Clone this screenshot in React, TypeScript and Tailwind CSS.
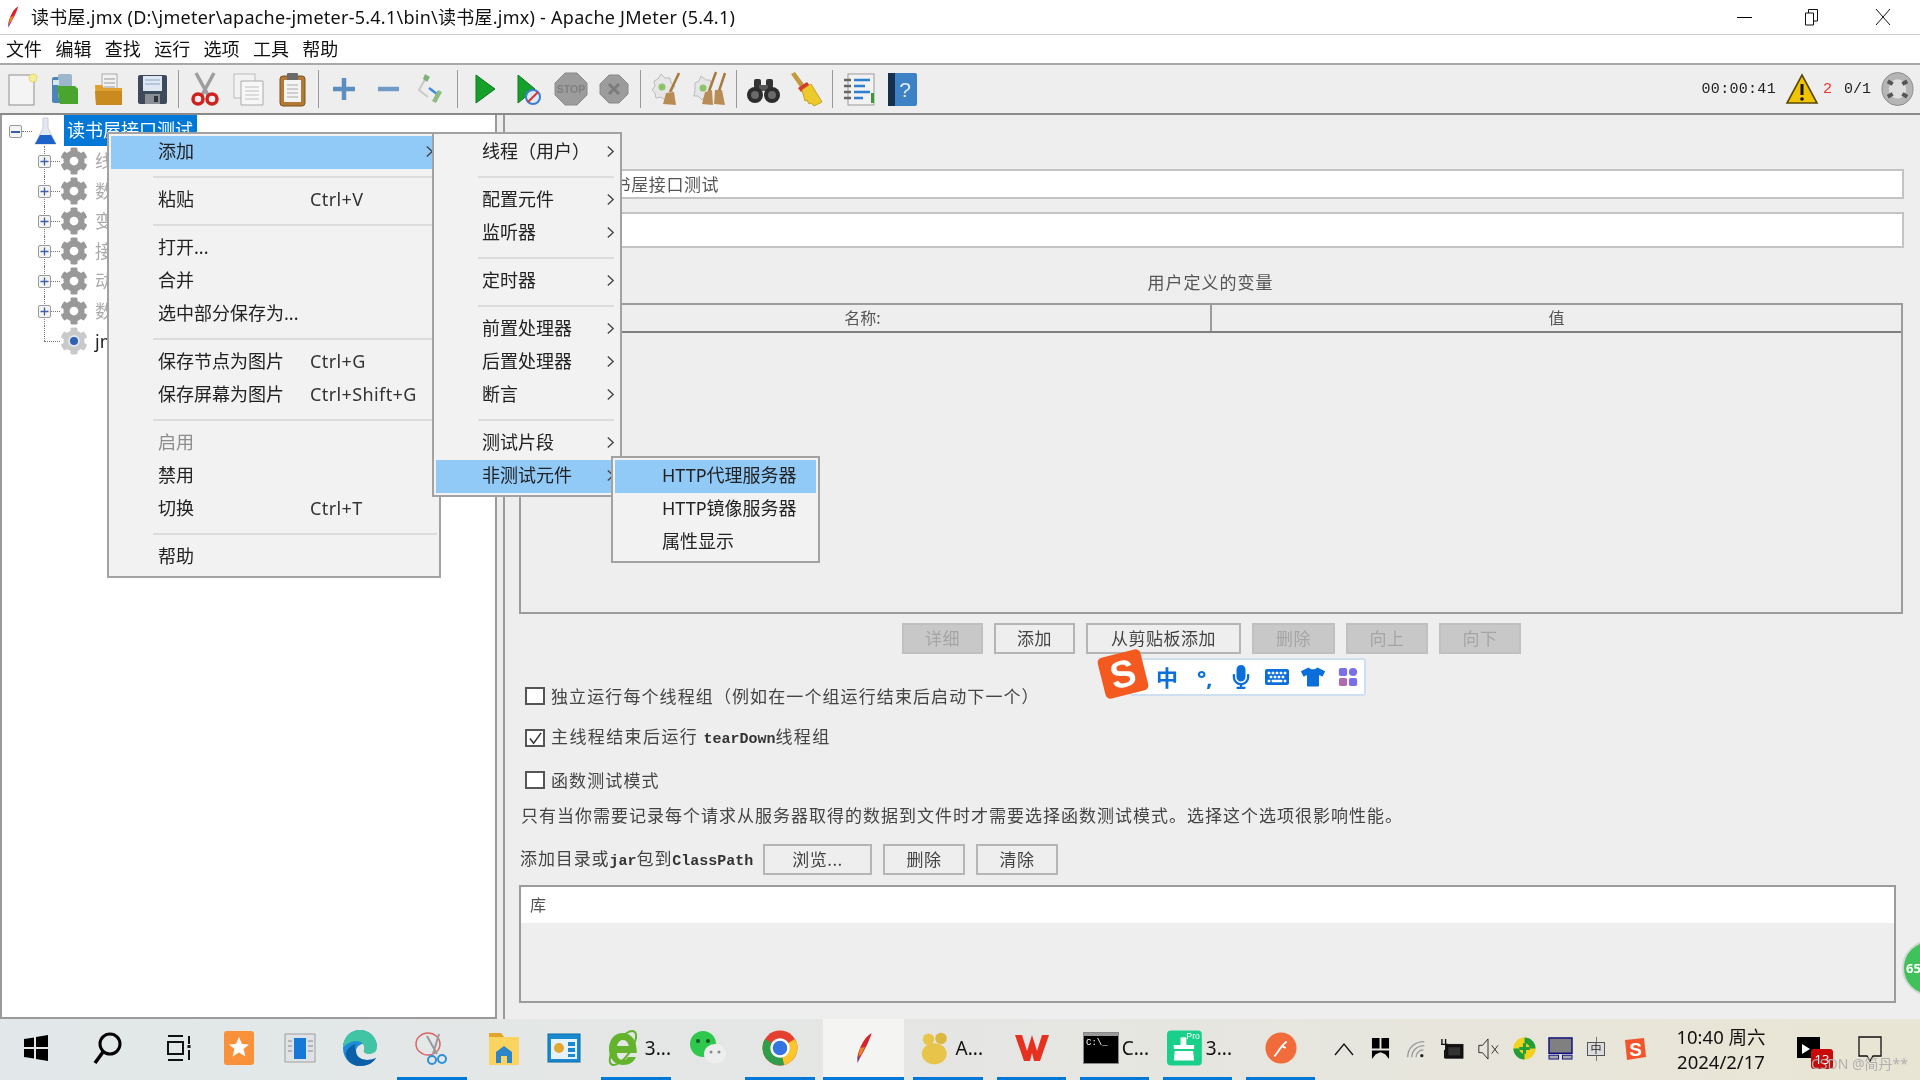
import React from "react";
import { FaCog, FaMicrophone, FaKeyboard, FaTshirt } from "react-icons/fa";

const Svg = ({ c, children, box = "0 0 36 36" }: { c: string; children: React.ReactNode; box?: string }) => (
  <svg viewBox={box} className={c}>{children}</svg>
);
const I = "w-[36px] h-[36px]";
const T = "w-[36px] h-[36px]";

const Feather = ({ c }: { c: string }) => (
  <Svg c={c}>
    <path d="M26 2C19 6 14 15 11 27l3 1C19 19 24 10 26 2z" fill="#d8232a" />
    <path d="M14 18l5-1-4 8-3 2z" fill="#e8862a" />
    <path d="M11 27l3 1-3 6z" fill="#7a2a8a" />
  </Svg>
);

const ToolIcons: Record<string, React.ReactNode> = {
  new: (<Svg c={I}><rect x="5" y="4" width="25" height="30" fill="#f4f4f4" stroke="#8f8f8f" /><circle cx="29" cy="7" r="4" fill="#f4ee9a" stroke="#e5d86a" /></Svg>),
  tmpl: (<Svg c={I}><rect x="5" y="6" width="13" height="26" rx="2" fill="#4a86b8" /><rect x="11" y="3" width="14" height="24" rx="2" fill="#9cb7cc" /><path d="M10 15h18l3 3v15H13z" fill="#4aa52e" /><rect x="6" y="9" width="6" height="5" fill="#d8e8f0" /></Svg>),
  open: (<Svg c={I}><rect x="11" y="3" width="15" height="20" fill="#f2f2f2" stroke="#aaa" /><path d="M13 8h11M13 12h11M13 16h11" stroke="#999" /><path d="M4 14h7l2 3h18v17H5z" fill="#e0a030" /><path d="M4 20h27v14H5z" fill="#c98a20" /></Svg>),
  save: (<Svg c={I}><rect x="4" y="4" width="29" height="29" rx="2" fill="#3d4a5c" /><rect x="9" y="5" width="19" height="15" fill="#dfe8f2" /><path d="M11 9h15M11 13h15" stroke="#8aa5c5" /><rect x="11" y="23" width="15" height="10" fill="#8a8f96" /><rect x="20" y="25" width="4" height="6" fill="#2c3440" /></Svg>),
  cut: (<Svg c={I}><path d="M9 2l12 22M27 2L15 24" stroke="#9e9e9e" strokeWidth="3.5" /><circle cx="11" cy="28" r="5" fill="none" stroke="#d02020" strokeWidth="3.5" /><circle cx="25" cy="28" r="5" fill="none" stroke="#d02020" strokeWidth="3.5" /></Svg>),
  copy: (<Svg c={I}><rect x="4" y="3" width="21" height="24" fill="#f2f2f2" stroke="#bbb" /><path d="M11 10h22v24H11z" fill="#f7f7f7" stroke="#aaa" /><path d="M15 16h14M15 20h14M15 24h14M15 28h14" stroke="#c0c0c0" /></Svg>),
  paste: (<Svg c={I}><rect x="6" y="5" width="25" height="30" rx="3" fill="#b27a35" stroke="#7c5520" /><rect x="10" y="9" width="17" height="22" fill="#f4f4f4" /><rect x="13" y="2" width="11" height="7" rx="1" fill="#6a6a6a" /><path d="M13 14h11M13 18h11M13 22h11M13 26h11" stroke="#aaa" /></Svg>),
  plus: (<Svg c={I}><path d="M18 7v22M7 18h22" stroke="#5b8fc0" strokeWidth="4.5" /></Svg>),
  minus: (<Svg c={I}><path d="M8 18h21" stroke="#6f9cc6" strokeWidth="4.5" /></Svg>),
  toggle: (<Svg c={I}><path d="M14 5l-8 14 9 7" stroke="#c9c9c9" fill="none" strokeWidth="2" /><path d="M12 3l5 3-3 5-4-3z" fill="#7fb27a" /><path d="M16 17l8 6" stroke="#3d8be0" strokeWidth="2.5" /><path d="M29 21l-6 11-4-2 6-11z" fill="#8dbb80" /></Svg>),
  start: (<Svg c={I}><path d="M10 4l19 14-19 14z" fill="#14a02a" stroke="#0c7a1c" /></Svg>),
  startnt: (<Svg c={I}><path d="M9 4l17 14-17 14z" fill="#14a02a" stroke="#0c7a1c" /><circle cx="24" cy="26" r="7" fill="#dfeaf5" stroke="#3a7fd0" strokeWidth="2" /><path d="M19 31l10-10" stroke="#e03030" strokeWidth="2" /></Svg>),
  stop: (<Svg c={I}><path d="M12 2h12l10 10v12L24 34H12L2 24V12z" fill="#9c9c9c" stroke="#8a8a8a" /><text x="18" y="22" fontSize="10.5" fontWeight="700" textAnchor="middle" fill="#7f7f7f" fontFamily="Liberation Sans">STOP</text></Svg>),
  shut: (<Svg c={I}><path d="M13 4h10l9 9v10l-9 9H13l-9-9V13z" fill="#9c9c9c" stroke="#8a8a8a" /><path d="M13 13l10 10M23 13L13 23" stroke="#7b7b7b" strokeWidth="3" /></Svg>),
  clear: (<Svg c={I}><path d="M5 10l4-2 3-5 4 4h5l1 5 4 3-3 4 1 5-5 1-3 4-4-3-5 1-1-5-3-3 3-4z" fill="#e6e6e6" stroke="#bbb" /><circle cx="13" cy="16" r="3.5" fill="#8cc46a" /><path d="M30 2L21 21" stroke="#a87a3e" strokeWidth="2.5" /><path d="M17 22l8-1 2 13-13-1z" fill="#b88d55" /></Svg>),
  clearall: (<Svg c={I}><path d="M3 12l4-2 2-5 5 4 4 0 2 5-2 5 1 6-6 0-3 4-4-4-4 0 1-6z" fill="#e6e6e6" stroke="#bbb" /><circle cx="11" cy="17" r="3.5" fill="#8cc46a" /><path d="M24 1L17 20M33 2L27 20" stroke="#a87a3e" strokeWidth="2.5" /><path d="M13 21l7-2 1 15-11-1z" fill="#b88d55" /><path d="M23 19l7 0 3 15-11-1z" fill="#b88d55" /></Svg>),
  bino: (<Svg c={I}><rect x="9" y="8" width="7" height="9" rx="2" fill="#333" /><rect x="21" y="8" width="7" height="9" rx="2" fill="#333" /><rect x="14" y="14" width="9" height="6" fill="#555" /><circle cx="10" cy="24" r="8" fill="#2c2c2c" /><circle cx="27" cy="24" r="8" fill="#2c2c2c" /><circle cx="10" cy="24" r="4" fill="#6a6a6a" /><circle cx="27" cy="24" r="4" fill="#6a6a6a" /></Svg>),
  broom: (<Svg c={I}><path d="M3 3l4-2 11 15-4 3z" fill="#c59a3a" /><path d="M10 17l9-6 3 4-9 6z" fill="#d23a2a" /><path d="M14 19l9-6 11 18-8 4-3-3-2 1-2-4-2 1z" fill="#ecc92c" stroke="#c9a21e" /></Svg>),
  list: (<Svg c={I}><rect x="7" y="3" width="26" height="31" fill="#f2f2f2" stroke="#9a9a9a" /><path d="M13 9h16M13 15h11M13 21h16M13 27h9" stroke="#2f7fd0" strokeWidth="2.5" /><path d="M3 9h7M3 15h7M3 21h7M3 27h7" stroke="#666" strokeWidth="2.5" /><rect x="30" y="22" width="3" height="10" fill="#3a9a3a" /></Svg>),
  help: (<Svg c={I}><rect x="6" y="2" width="27" height="33" rx="2" fill="#3d82c4" /><rect x="4" y="2" width="7" height="33" fill="#16304f" /><text x="21" y="26" fontSize="21" textAnchor="middle" fill="#e5eef7" fontFamily="Liberation Sans">?</text></Svg>),
};

const Slot = ({ k }: { k: string }) => (
  <div className="w-[43.5px] h-full flex items-center justify-center shrink-0">{ToolIcons[k]}</div>
);
const Sep = () => <div className="w-px h-[38px] mx-[4px] bg-[#999] shrink-0" />;

const MenuRow = ({ label, sc, hi, dis }: { label: string; sc?: string; hi?: boolean; dis?: boolean }) => (
  <div className={`h-[33px] flex items-center pl-[47px] pb-[3px] text-[18px] leading-none ${hi ? "bg-[#91c9f7]" : ""} ${dis ? "text-[#8d8d8d]" : "text-[#222]"}`}>
    <span className="w-[152px] shrink-0 whitespace-nowrap">{label}</span>
    {sc && <span className="whitespace-nowrap text-[#333] tracking-[0.4px]">{sc}</span>}
  </div>
);
const MenuSep = ({ c = "ml-[42px]" }: { c?: string }) => (
  <div className="h-[15px] flex items-center"><div className={`h-[2px] w-full bg-[#dcdcdc] ${c}`} /></div>
);
const Arrow = () => (
  <svg viewBox="0 0 10 14" className="w-[9px] h-[13px] shrink-0 absolute right-[3px] top-[9px]">
    <path d="M2 1.5L8 7l-6 5.5" stroke="#444" strokeWidth="1.5" fill="none" />
  </svg>
);
const SubRow = ({ label, hi }: { label: string; hi?: boolean }) => (
  <div className={`relative h-[33px] flex items-center pl-[46px] pb-[3px] text-[18px] leading-none text-[#222] whitespace-nowrap ${hi ? "bg-[#91c9f7]" : ""}`}>
    {label}
    <Arrow />
  </div>
);

const Btn = ({ label, w, dis }: { label: string; w: string; dis?: boolean }) => (
  <div className={`${w} h-[31px] flex items-center justify-center pb-[2px] border-2 text-[17px] leading-none tracking-[0.5px] shrink-0 ${dis ? "bg-[#c8c8c8] border-[#c0c0c0] text-[#a5a5a5]" : "bg-[#eeeeee] border-[#b5b5b5] text-[#444]"}`}>{label}</div>
);
const Check = ({ on }: { on?: boolean }) => (
  <div className="w-[20px] h-[18px] border-2 border-[#555] bg-white shrink-0 flex items-center justify-center">
    {on && <svg viewBox="0 0 16 16" className="w-[15px] h-[15px]"><path d="M2 8l4 5 8-11" stroke="#333" strokeWidth="1.6" fill="none" /></svg>}
  </div>
);
const Mono = ({ children }: { children: React.ReactNode }) => (
  <span className="font-['Liberation_Mono',monospace] text-[15px] font-bold text-[#333] tracking-[0px]">{children}</span>
);

const TreeRow = ({ label, last, j }: { label: string; last?: boolean; j?: boolean }) => (
  <div className="h-[30px] flex items-center relative">
    <div className={`absolute left-[42px] top-0 w-0 border-l border-dotted border-[#777] ${last ? "h-[15px]" : "h-[30px]"}`} />
    <div className="absolute left-[42px] top-[15px] w-[16px] border-t border-dotted border-[#777]" />
    {!j && (
      <div className="absolute left-[36px] top-[9px] w-[13px] h-[13px] bg-[#f4f4f4] border border-[#9a9a9a] rounded-[2px] flex items-center justify-center">
        <svg viewBox="0 0 9 9" className="w-[9px] h-[9px]"><path d="M4.5 0.5v8M0.5 4.5h8" stroke="#3a5fa8" strokeWidth="1.3" /></svg>
      </div>
    )}
    <div className="ml-[58px] w-[28px] h-[28px] relative flex items-center justify-center shrink-0">
      <FaCog className={`w-[28px] h-[28px] ${j ? "text-[#c9c9c9]" : "text-[#999999]"}`} />
      {j && <div className="absolute w-[12px] h-[12px] rounded-full bg-[#2f62b0] border-2 border-[#dde6f2]" />}
    </div>
    <span className={`ml-[7px] text-[18px] leading-none whitespace-nowrap ${j ? "text-[#222]" : "text-[#aaa]"}`}>{label}</span>
  </div>
);

const Task = ({ w, run, ml, bg, icon, label }: { w: string; run?: boolean; ml?: string; bg?: string; icon: React.ReactNode; label?: string }) => (
  <div className={`${w} ${ml || ""} ${bg || ""} h-full shrink-0 flex items-center border-b-[3px] ${run ? "border-[#0078d7]" : "border-transparent"} ${label ? "pl-[4px] gap-[4px]" : "justify-center"}`}>
    {icon}
    {label && <span className="text-[19px] leading-none text-[#111]">{label}</span>}
  </div>
);
const Tray = ({ children }: { children: React.ReactNode }) => (
  <div className="w-[36px] h-full flex items-center justify-center shrink-0 pb-[2px]">{children}</div>
);

export default function App() {
  return (
    <div className="relative w-[1920px] h-[1080px] overflow-hidden flex flex-col bg-[#eeeeee] font-['Noto_Sans','Noto_Sans_CJK_SC',sans-serif] blur-[0.35px]">
      {/* title bar */}
      <div className="h-[35px] shrink-0 bg-white border-b border-[#cfcfcf] flex items-center">
        <Feather c="w-[24px] h-[24px] ml-[1px]" />
        <span className="ml-[6px] text-[18px] leading-none tracking-[0.25px] text-[#111] whitespace-nowrap">读书屋.jmx (D:\jmeter\apache-jmeter-5.4.1\bin\读书屋.jmx) - Apache JMeter (5.4.1)</span>
        <div className="ml-auto flex items-center h-full">
          <div className="w-[62px] flex justify-center"><div className="w-[15px] h-px bg-black" /></div>
          <div className="w-[74px] flex justify-center">
            <svg viewBox="0 0 16 18" className="w-[16px] h-[18px]"><path d="M1.5 5h8v12h-8zM4.5 5V1.5h9V13H9.5" fill="none" stroke="#111" /></svg>
          </div>
          <div className="w-[68px] flex justify-center mr-[3px]">
            <svg viewBox="0 0 16 18" className="w-[16px] h-[18px]"><path d="M1 1l14 16M15 1L1 17" stroke="#111" /></svg>
          </div>
        </div>
      </div>
      {/* menu bar */}
      <div className="h-[30px] shrink-0 bg-white border-b-2 border-[#a9a9a9] flex items-center pl-[6px] gap-[13.4px] text-[18px] leading-none text-[#111]">
        {["文件", "编辑", "查找", "运行", "选项", "工具", "帮助"].map((m) => (
          <span key={m}>{m}</span>
        ))}
      </div>
      {/* toolbar */}
      <div className="h-[50px] shrink-0 bg-[#eeeeee] border-b-2 border-[#8a8a8a] flex items-center">
        <Slot k="new" /><Slot k="tmpl" /><Slot k="open" /><Slot k="save" /><Sep />
        <Slot k="cut" /><Slot k="copy" /><Slot k="paste" /><Sep />
        <Slot k="plus" /><Slot k="minus" /><Slot k="toggle" /><Sep />
        <Slot k="start" /><Slot k="startnt" /><Slot k="stop" /><Slot k="shut" /><Sep />
        <Slot k="clear" /><Slot k="clearall" /><Sep />
        <Slot k="bino" /><Slot k="broom" /><Sep />
        <Slot k="list" /><Slot k="help" />
        <div className="ml-auto flex items-center pr-[6px]">
          <span className="mt-[3px] font-['Liberation_Mono',monospace] text-[15px] tracking-[0.3px] text-[#222]">00:00:41</span>
          <svg viewBox="0 0 34 32" className="w-[34px] h-[32px] ml-[9px]"><path d="M17 2l15 28H2z" fill="#f0c400" stroke="#5a4a00" strokeWidth="1.6" /><path d="M17 11v11" stroke="#111" strokeWidth="3" /><circle cx="17" cy="26" r="1.8" fill="#111" /></svg>
          <span className="mt-[3px] ml-[4px] font-['Liberation_Mono',monospace] text-[15px] text-[#f03030]">2</span>
          <span className="mt-[3px] ml-[12px] font-['Liberation_Mono',monospace] text-[15px] text-[#222]">0/1</span>
          <svg viewBox="0 0 34 36" className="w-[33px] h-[36px] ml-[10px]"><ellipse cx="17" cy="18" rx="16" ry="17" fill="#b5b5b5" stroke="#8a8a8a" /><ellipse cx="17" cy="18" rx="9" ry="10" fill="#dedede" /><path d="M7 10l5 3M27 10l-5 3M7 26l5-3M27 26l-5-3" stroke="#555" strokeWidth="4" /></svg>
        </div>
      </div>
      {/* main */}
      <div className="h-[904px] shrink-0 flex">
        {/* tree */}
        <div className="w-[497px] shrink-0 bg-white border-l-2 border-r-2 border-b-2 border-[#9a9a9a] relative">
          <div className="h-[31px] flex items-center relative">
            <div className="absolute left-[7px] top-[10px] w-[13px] h-[13px] bg-[#f4f4f4] border border-[#9a9a9a] rounded-[2px] flex items-center justify-center">
              <div className="w-[9px] h-[2px] bg-[#3a5fa8]" />
            </div>
            <div className="absolute left-[20px] top-[16px] w-[10px] border-t border-dotted border-[#777]" />
            <svg viewBox="0 0 24 30" className="absolute left-[31px] top-[2px] w-[24px] h-[30px]"><path d="M10 1h5v10l8 16H2l8-16z" fill="#e4e9f1" stroke="#c6ccd6" /><path d="M7 18h11l5 9H2z" fill="#1c62c8" /></svg>
            <div className="ml-[62px] w-[133px] h-[31px] bg-[#0078d7] text-white text-[18px] leading-none pl-[3px] pb-[2px] flex items-center whitespace-nowrap">读书屋接口测试</div>
          </div>
          <TreeRow label="线程组" />
          <TreeRow label="数据库" />
          <TreeRow label="变量" />
          <TreeRow label="接口" />
          <TreeRow label="动态" />
          <TreeRow label="数据" />
          <TreeRow label="jmeter" last j />
        </div>
        <div className="w-[6px] shrink-0" />
        {/* right pane */}
        <div className="flex-1 border-l-2 border-[#9a9a9a] pl-[14px] flex flex-col text-[#444] font-['Noto_Sans_CJK_SC',sans-serif]">
          <div className="mt-[54px] h-[30px] ml-[66px] mr-[16px] bg-white border-2 border-[#c4c4c4] flex items-center pl-[9px] pb-[2px] text-[17px] leading-none tracking-[0.6px] text-[#555] shrink-0">读书屋接口测试</div>
          <div className="mt-[13px] h-[36px] ml-[66px] mr-[16px] bg-white border-2 border-[#c4c4c4] shrink-0" />
          <div className="h-[55px] w-[1383px] shrink-0 flex items-end justify-center pb-[13px] text-[17px] leading-none tracking-[1px] text-[#555]">用户定义的变量</div>
          <div className="h-[311px] w-[1384px] shrink-0 border-2 border-[#9c9c9c] flex flex-col">
            <div className="h-[28px] shrink-0 border-b-2 border-[#7f7f7f] flex text-[16px] leading-none text-[#555]">
              <div className="w-[691px] flex items-center justify-center border-r-2 border-[#9c9c9c] pb-[2px] pr-[6px]">名称:</div>
              <div className="flex-1 flex items-center justify-center pb-[2px]">值</div>
            </div>
          </div>
          <div className="mt-[9px] h-[31px] w-[1385px] shrink-0 flex justify-center gap-[11px]">
            <Btn label="详细" w="w-[81px]" dis />
            <Btn label="添加" w="w-[81px]" />
            <Btn label="从剪贴板添加" w="w-[155px]" />
            <Btn label="删除" w="w-[83px]" dis />
            <Btn label="向上" w="w-[82px]" dis />
            <Btn label="向下" w="w-[82px]" dis />
          </div>
          <div className="mt-[33px] h-[18px] flex items-center ml-[6px] gap-[6px] shrink-0">
            <Check /><span className="text-[17px] leading-none tracking-[1.1px] whitespace-nowrap pb-[2px]">独立运行每个线程组（例如在一个组运行结束后启动下一个）</span>
          </div>
          <div className="mt-[24px] h-[18px] flex items-center ml-[6px] gap-[6px] shrink-0">
            <Check on /><span className="text-[17px] leading-none tracking-[1.4px] whitespace-nowrap pb-[2px]">主线程结束后运行 <Mono>tearDown</Mono>线程组</span>
          </div>
          <div className="mt-[24px] h-[18px] flex items-center ml-[6px] gap-[6px] shrink-0">
            <Check /><span className="text-[17px] leading-none tracking-[1.1px] whitespace-nowrap pb-[2px]">函数测试模式</span>
          </div>
          <div className="mt-[15px] h-[20px] flex items-center ml-[2px] text-[17px] leading-none tracking-[1px] whitespace-nowrap shrink-0">只有当你需要记录每个请求从服务器取得的数据到文件时才需要选择函数测试模式。选择这个选项很影响性能。</div>
          <div className="mt-[20px] h-[31px] flex items-center shrink-0">
            <span className="w-[243px] ml-[1px] shrink-0 text-[17px] leading-none tracking-[0.9px] whitespace-nowrap pb-[2px]">添加目录或<Mono>jar</Mono>包到<Mono>ClassPath</Mono></span>
            <Btn label="浏览..." w="w-[109px]" />
            <div className="w-[11px]" />
            <Btn label="删除" w="w-[82px]" />
            <div className="w-[11px]" />
            <Btn label="清除" w="w-[82px]" />
          </div>
          <div className="mt-[10px] h-[118px] w-[1377px] shrink-0 border-2 border-[#9c9c9c]">
            <div className="h-[36px] bg-white flex items-center pl-[9px] pb-[2px] text-[16px] leading-none text-[#555]">库</div>
          </div>
        </div>
      </div>
      {/* taskbar */}
      <div className="h-[61px] shrink-0 flex items-stretch bg-gradient-to-r from-[#e2e8e9] via-[#e5e6e4] to-[#e9e5d4]">
        <Task w="w-[72px]" icon={<Svg c="w-[26px] h-[26px]" box="0 0 26 26"><path d="M1 4l10-1.5V12H1zM13 2l12-2v12H13zM1 14h10v9.500L1 22zM13 14h12v12l-12-2z" fill="#000" /></Svg>} />
        <Task w="w-[71px]" icon={<Svg c={T}><circle cx="20" cy="14" r="10" fill="none" stroke="#000" strokeWidth="3" /><path d="M13 22L5 33" stroke="#000" strokeWidth="3.500" /></Svg>} />
        <Task w="w-[72px]" icon={<Svg c="w-[28px] h-[28px]" box="0 0 28 28"><path d="M3 2h15M3 26h15M3 8h15v12H3zM24 2v8M24 16v10" fill="none" stroke="#111" strokeWidth="2" /><rect x="22.500" y="11" width="3" height="3" fill="#111" /></Svg>} />
        <Task w="w-[48px]" icon={<Svg c="w-[32px] h-[36px]" box="0 0 32 36"><rect x="1" y="1" width="30" height="34" rx="3" fill="#f9913a" /><path d="M16 7l3 7 7 .6-5.500 4.500 2 7.400L16 22.500 9.500 26.500l2-7.400L6 14.600l7-.6z" fill="#fff" /></Svg>} />
        <Task w="w-[73px]" icon={<Svg c="w-[32px] h-[30px]" box="0 0 32 30"><rect x="1" y="1" width="30" height="28" fill="#dfe3e6" stroke="#a0a0a0" /><rect x="10" y="5" width="12" height="21" fill="#1778d8" /><path d="M4 8h4M4 13h4M4 18h4M24 8h5M24 13h5M24 18h5" stroke="#888" /></Svg>} />
        <Task w="w-[48px]" icon={<Svg c="w-[36px] h-[38px]" box="0 0 36 38"><path d="M18 1C8 1 1 9 1 19c0 10 7 18 17 18 7 0 13-3 16-8-8 4-20 2-20-7 0-5 6-8 11-8 6 0 10 4 10 4C35 9 28 1 18 1z" fill="#1d8bd6" /><path d="M18 1C28 1 35 9 35 18c0 5-4 7-8 7s-6-2-5-4c1-5-2-9-8-9C8 12 2 17 1 19 1 9 8 1 18 1z" fill="#41c4a4" /><path d="M14 22c0 9 12 11 20 7-3 5-9 8-16 8-8 0-14-6-14-12 0-4 5-9 10-10-3 2-0 7 0 7z" fill="#0d5fa8" /></Svg>} />
        <Task w="w-[70px]" ml="ml-[13px]" run icon={<Svg c={T}><ellipse cx="14" cy="14" rx="12" ry="11" fill="none" stroke="#d8676a" strokeWidth="1.500" /><path d="M13 6l10 18M25 4l-6 20" stroke="#999" strokeWidth="2" /><circle cx="18" cy="30" r="4" fill="none" stroke="#2f8fd8" strokeWidth="2" /><circle cx="28" cy="29" r="4" fill="none" stroke="#2f8fd8" strokeWidth="2" /></Svg>} />
        <Task w="w-[74px]" icon={<Svg c="w-[34px] h-[36px]" box="0 0 34 36"><path d="M2 3h12l3 4h15v28H2z" fill="#fbd35f" /><path d="M2 3h12l3 4H2z" fill="#e0a52a" /><path d="M9 33V22l8-6 8 6v11h-5v-7h-6v7z" fill="#2c86c9" /></Svg>} />
        <Task w="w-[46px]" icon={<Svg c="w-[34px] h-[30px]" box="0 0 34 30"><rect x="1" y="1" width="32" height="28" fill="#1a8ad0" stroke="#0b6aa5" /><rect x="4" y="6" width="26" height="20" fill="#e6f2f9" /><circle cx="12" cy="15" r="5" fill="#e2a72e" /><path d="M21 9h7v4h-7zM21 15h7v4h-7zM21 21h7v3h-7z" fill="#1a8ad0" /></Svg>} />
        <Task w="w-[70px]" ml="ml-[14px]" run label="3..." icon={<Svg c="w-[36px] h-[40px]" box="0 0 36 40"><path d="M18 5C9 5 4 12 4 21s5 16 14 16c7 0 11-3 13-8h-8c-1 2-3 3-5 3-4 0-6-3-6-7h20c0-12-5-20-14-20zm-6 13c1-4 3-6 6-6s5 2 6 6z" fill="#63b32d" /><ellipse cx="18" cy="20" rx="20" ry="8" transform="rotate(-55 18 20)" fill="none" stroke="#63b32d" strokeWidth="2" /></Svg>} />
        <Task w="w-[74px]" icon={<Svg c="w-[38px] h-[36px]" box="0 0 38 36"><ellipse cx="14" cy="14" rx="13" ry="13" fill="#2dc84d" /><circle cx="9" cy="11" r="2" fill="#0d5a20" /><circle cx="19" cy="11" r="2" fill="#0d5a20" /><ellipse cx="26" cy="24" rx="11" ry="10" fill="#eeeeee" /><circle cx="22" cy="22" r="1.500" fill="#888" /><circle cx="30" cy="22" r="1.500" fill="#888" /></Svg>} />
        <Task w="w-[70px]" run icon={<Svg c="w-[36px] h-[36px]"><circle cx="18" cy="18" r="17.500" fill="#e5402f" /><path d="M33 9a17.500 17.500 0 0 1-11 26l-4-17z" fill="#fbc52c" /><path d="M3 9a17.500 17.500 0 0 0 19 26l-4-17z" fill="#2e9e4a" /><circle cx="18" cy="18" r="8.500" fill="#3474e0" stroke="#fff" strokeWidth="2.500" /></Svg>} />
        <Task w="w-[81px]" ml="ml-[8px]" run bg="bg-[#f4f4f2]" icon={<Feather c="w-[34px] h-[40px]" />} />
        <Task w="w-[70px]" ml="ml-[9px]" run label="A..." icon={<Svg c="w-[36px] h-[36px]"><circle cx="12" cy="9" r="6" fill="#e7c54a" /><circle cx="25" cy="8" r="6" fill="#dcb93e" /><ellipse cx="18" cy="24" rx="13" ry="11" fill="#e9c44a" /></Svg>} />
        <Task w="w-[69px]" ml="ml-[14px]" run icon={<Svg c="w-[36px] h-[30px]" box="0 0 36 30"><path d="M1 2h7l5 16 5-16 5 16 5-16h7l-9 26h-6l-2-8-2 8h-6z" fill="#e63020" /></Svg>} />
        <Task w="w-[69px]" ml="ml-[14px]" run label="C..." icon={<div className="w-[34px] h-[30px] bg-black border-t-[3px] border-[#9a9a9a] shadow-[0_0_0_1px_#888] flex items-start justify-start pl-[2px] pt-[3px] text-[9px] leading-none text-white font-['Liberation_Mono',monospace]">C:\_</div>} />
        <Task w="w-[69px]" ml="ml-[14px]" run label="3..." icon={<Svg c="w-[36px] h-[36px]" box="0 0 36 36"><rect x="0" y="0" width="36" height="36" rx="4" fill="#19d08a" /><rect x="14" y="7" width="6" height="8" fill="#fff" /><path d="M7 15h21v4H7zM8 21h19l1 10H7z" fill="#fff" /><text x="27" y="9" fontSize="9" fill="#fff" textAnchor="middle" fontFamily="Liberation Sans">Pro</text></Svg>} />
        <Task w="w-[69px]" ml="ml-[14px]" run icon={<Svg c="w-[32px] h-[32px]" box="0 0 34 34"><circle cx="17" cy="17" r="16.500" fill="#f26b3a" /><path d="M10 26l8-11 5-5M18 15l4 2" stroke="#fff" strokeWidth="2" /></Svg>} />
        <div className="ml-[11px] flex h-full shrink-0">
          <Tray><svg viewBox="0 0 20 14" className="w-[20px] h-[14px]"><path d="M1 13L10 2l9 11" fill="none" stroke="#111" strokeWidth="1.300" /></svg></Tray>
          <Tray><svg viewBox="0 0 20 24" className="w-[19px] h-[23px]"><path d="M1 1h8v11H1zM11 1h8v11h-8zM1 14h18v9l-4-5-5-2-5 2-4 5z" fill="#000" /></svg></Tray>
          <Tray><svg viewBox="0 0 24 24" className="w-[20px] h-[20px]"><path d="M2 22C2 11 10 3 22 3M7 22c0-8 6-14 15-14M12 22c0-5 4-9 9-9" fill="none" stroke="#999" strokeWidth="1.500" /><circle cx="19" cy="20" r="2" fill="#222" /></svg></Tray>
          <Tray><svg viewBox="0 0 26 24" className="w-[24px] h-[22px]"><rect x="6" y="7" width="19" height="15" fill="#111" stroke="#111" /><rect x="9" y="10" width="13" height="9" fill="#333" /><path d="M2 1v6M6 1v6M1 7h7v4l-3 3v8" fill="none" stroke="#111" strokeWidth="1.500" /></svg></Tray>
          <Tray><svg viewBox="0 0 24 26" className="w-[22px] h-[24px]"><path d="M2 9h4l6-7v22l-6-7H2z" fill="none" stroke="#222" /><path d="M16 9l7 9M23 9l-7 9" stroke="#222" /></svg></Tray>
          <Tray><svg viewBox="0 0 26 26" className="w-[23px] h-[23px]"><circle cx="13" cy="13" r="12.500" fill="#f2d21c" /><path d="M13 .5A12.500 12.500 0 0 1 25.500 13H19a6 6 0 0 0-6-6zM13 25.500A12.500 12.500 0 0 1 .5 13H7a6 6 0 0 0 6 6z" fill="#1f9e3a" /><path d="M13 7v12M7 13h12" stroke="#1f9e3a" strokeWidth="3.500" /></svg></Tray>
          <Tray><svg viewBox="0 0 26 24" className="w-[25px] h-[23px]"><rect x="1" y="1" width="24" height="16" fill="#808080" stroke="#0c0c80" strokeWidth="1.500" /><rect x="1" y="19" width="10" height="4" fill="#aaa" stroke="#0c0c80" /><rect x="15" y="19" width="10" height="4" fill="#aaa" stroke="#0c0c80" /></svg></Tray>
          <Tray><div className="relative w-[20px] h-[24px] flex items-center justify-center"><div className="absolute w-px h-[24px] bg-[#777]" /><div className="relative w-[18px] h-[14px] bg-[#ddd] border border-[#555] text-[11px] leading-none flex items-center justify-center text-[#222]">中</div></div></Tray>
          <div className="w-[42px] h-full flex items-center justify-center shrink-0 pb-[2px]"><svg viewBox="0 0 24 24" className="w-[24px] h-[24px]"><path d="M2 3l19-2 2 19-19 3z" fill="#f2552c" /><text x="12.500" y="19" fontSize="19" fontWeight="700" fill="#fff" textAnchor="middle" fontFamily="Liberation Sans">S</text></svg></div>
        </div>
        <div className="w-[130px] h-full shrink-0 flex flex-col items-center justify-center gap-[7px] text-[18.500px] leading-none text-[#111] whitespace-nowrap">
          <span>10:40 周六</span>
          <span>2024/2/17</span>
        </div>
        <div className="w-[44px] h-full shrink-0 flex items-center justify-center pb-[4px]">
          <svg viewBox="0 0 23 21" className="w-[23px] h-[21px]"><rect x="0" y="0" width="23" height="21" fill="#000" /><path d="M5 7l8 5-8 5z" fill="#fff" /></svg>
        </div>
        <div className="ml-[25px] w-[30px] h-full shrink-0 flex items-center justify-center pb-[2px]">
          <svg viewBox="0 0 24 26" className="w-[24px] h-[26px]"><path d="M1 1h22v19h-8l-3 5-3-5H1z" fill="none" stroke="#111" strokeWidth="1.300" /></svg>
        </div>
      </div>

      {/* context menu */}
      <div className="absolute left-[107px] top-[132px] w-[334px] h-[446px] z-10 bg-[#f2f2f2] border-2 border-[#a2a2a2] p-[2px]">
        <div className="relative">
          <MenuRow label="添加" hi />
          <svg viewBox="0 0 10 14" className="absolute left-[314px] top-[9px] w-[9px] h-[13px]"><path d="M2 1.500L8 7l-6 5.500" stroke="#444" strokeWidth="1.500" fill="none" /></svg>
        </div>
        <MenuSep />
        <MenuRow label="粘贴" sc="Ctrl+V" />
        <MenuSep />
        <MenuRow label="打开..." />
        <MenuRow label="合并" />
        <MenuRow label="选中部分保存为..." />
        <MenuSep />
        <MenuRow label="保存节点为图片" sc="Ctrl+G" />
        <MenuRow label="保存屏幕为图片" sc="Ctrl+Shift+G" />
        <MenuSep />
        <MenuRow label="启用" dis />
        <MenuRow label="禁用" />
        <MenuRow label="切换" sc="Ctrl+T" />
        <MenuSep />
        <MenuRow label="帮助" />
      </div>
      {/* submenu */}
      <div className="absolute left-[432px] top-[132px] w-[190px] h-[365px] z-20 bg-[#f2f2f2] border-2 border-[#a2a2a2] p-[2px]">
        <SubRow label="线程（用户）" />
        <MenuSep c="ml-[42px] mr-[4px]" />
        <SubRow label="配置元件" />
        <SubRow label="监听器" />
        <MenuSep c="ml-[42px] mr-[4px]" />
        <SubRow label="定时器" />
        <MenuSep c="ml-[42px] mr-[4px]" />
        <SubRow label="前置处理器" />
        <SubRow label="后置处理器" />
        <SubRow label="断言" />
        <MenuSep c="ml-[42px] mr-[4px]" />
        <SubRow label="测试片段" />
        <SubRow label="非测试元件" hi />
      </div>
      {/* sub-submenu */}
      <div className="absolute left-[611px] top-[456px] w-[209px] h-[107px] z-30 bg-[#f2f2f2] border-2 border-[#a2a2a2] p-[2px]">
        <div className="h-[33px] bg-[#91c9f7] flex items-center pl-[47px] pb-[3px] text-[18px] leading-none text-[#222] whitespace-nowrap">HTTP代理服务器</div>
        <div className="h-[33px] flex items-center pl-[47px] pb-[3px] text-[18px] leading-none text-[#222] whitespace-nowrap">HTTP镜像服务器</div>
        <div className="h-[33px] flex items-center pl-[47px] pb-[3px] text-[18px] leading-none text-[#222] whitespace-nowrap">属性显示</div>
      </div>
      {/* IME bar */}
      <div className="absolute left-[1130px] top-[658px] w-[236px] h-[38px] z-30 bg-white border-2 border-[#cfdff2] rounded-[3px] flex items-center text-[#0a6fd8]">
        <span className="absolute left-[24px] text-[22px] leading-none font-bold">中</span>
        <span className="absolute left-[65px] top-[6px] text-[22px] leading-none font-bold">°,</span>
        <FaMicrophone className="absolute left-[99px] w-[20px] h-[24px]" />
        <FaKeyboard className="absolute left-[133px] w-[24px] h-[24px]" />
        <FaTshirt className="absolute left-[169px] w-[24px] h-[22px]" />
        <svg viewBox="0 0 22 22" className="absolute left-[206px] w-[20px] h-[20px]">
          <rect x="1" y="1" width="9" height="9" rx="2" fill="#7a6fe8" /><rect x="12" y="1" width="9" height="9" rx="4.500" fill="#7a6fe8" /><rect x="1" y="12" width="9" height="9" rx="2" fill="#b06ab0" /><rect x="12" y="12" width="9" height="9" rx="2" fill="#7a6fe8" />
        </svg>
      </div>
      <div className="absolute left-[1101px] top-[653px] w-[44px] h-[42px] z-30 rotate-[-14deg] rounded-[5px] bg-[#f4591f] flex items-center justify-center text-[38px] leading-none font-bold text-white font-['Liberation_Sans',sans-serif]">S</div>
      {/* green ball */}
      <div className="absolute left-[1902px] top-[940px] w-[56px] h-[56px] z-30 rounded-full bg-[#3fc25a] border-2 border-[#cfd8cf] flex items-center pl-[2px] text-[13px] leading-none font-bold text-white">65</div>
      {/* notification badge */}
      <div className="absolute left-[1811px] top-[1049px] w-[22px] h-[20px] z-30 bg-[#c80a0a] rounded-[3px] flex items-center justify-center text-[13px] leading-none text-white">13</div>
      {/* watermark */}
      <div className="absolute left-[1811px] top-[1057px] z-40 text-[14px] leading-none text-[#b0b0b0] whitespace-nowrap">CSDN @简丹**</div>
    </div>
  );
}
